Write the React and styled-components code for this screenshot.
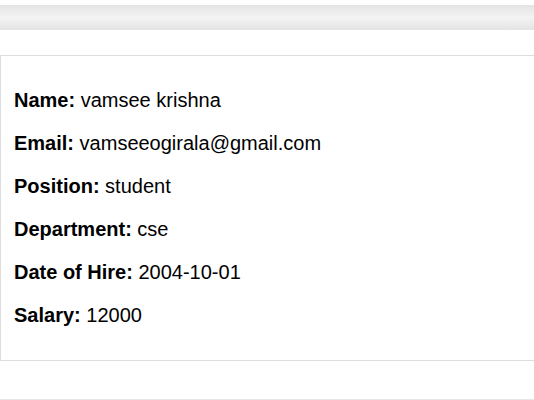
import React from "react";
import styled, { createGlobalStyle } from "styled-components";

const Global = createGlobalStyle`
  html, body { margin: 0; padding: 0; background: #fff; overflow: hidden; }
  body { font-family: "Liberation Sans", Arial, sans-serif; color: #000; }
`;

const Page = styled.div`
  display: flex;
  flex-direction: column;
  padding-top: 5px;
  width: 560px;
`;

const TopBar = styled.div`
  height: 25px;
  background: linear-gradient(to bottom, #e4e4e4 0%, #f3f3f3 50%, #e4e4e4 100%);
`;

const Card = styled.div`
  margin-top: 25px;
  border: 1px solid #dddddd;
  padding: 13px 13px 13px;
`;

const Row = styled.p`
  margin: 20px 0;
  font-size: 20px;
  line-height: 23px;
`;

const Label = styled.strong`
  font-weight: bold;
`;

const BottomBar = styled.div`
  margin-top: 38px;
  height: 20px;
  background: #e6e6e6;
`;

const rows = [
  ["Name:", "vamsee krishna"],
  ["Email:", "vamseeogirala@gmail.com"],
  ["Position:", "student"],
  ["Department:", "cse"],
  ["Date of Hire:", "2004-10-01"],
  ["Salary:", "12000"],
];

export default function App() {
  return (
    <>
      <Global />
      <Page>
        <TopBar />
        <Card>
          {rows.map(([l, v]) => (
            <Row key={l}>
              <Label>{l}</Label> {v}
            </Row>
          ))}
        </Card>
        <BottomBar />
      </Page>
    </>
  );
}
